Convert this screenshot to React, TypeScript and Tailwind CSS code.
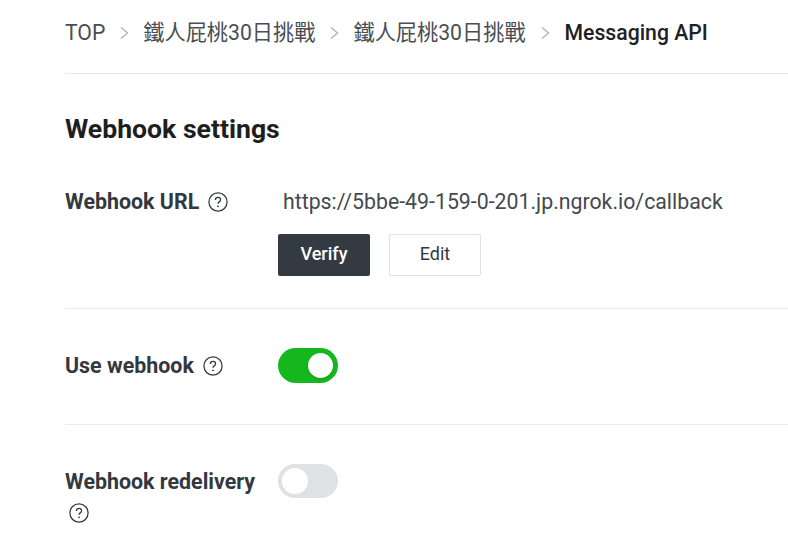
import React from "react";

const Help = () => (
  <svg width="20" height="20" viewBox="0 0 20 20" fill="none" className="shrink-0">
    <circle cx="10" cy="10" r="9.1" stroke="#33383e" strokeWidth="1.25" />
    <path d="M7.4 8c0-1.6 1.1-2.6 2.6-2.6s2.6 1 2.6 2.3c0 1.1-.6 1.6-1.4 2.2-.8.5-1.2 1-1.2 1.9" stroke="#33383e" strokeWidth="1.25" fill="none" />
    <circle cx="10" cy="14.3" r=".9" fill="#33383e" />
  </svg>
);

const Chevron = () => (
  <svg width="9" height="14" viewBox="0 0 9 14" fill="none" className="shrink-0">
    <path d="M1 1.5 7.5 7 1 12.5" stroke="#b2b5b8" strokeWidth="1.4" />
  </svg>
);

const crumbFont = "font-['Roboto','Noto_Sans_CJK_TC',sans-serif]";

export default function App() {
  return (
    <div className={`w-[788px] h-[538px] overflow-hidden bg-white pl-[65px] ${crumbFont} text-[#33383e]`}>
      <nav className="h-[74px] border-b border-[#e9eaeb] flex items-center pb-[8px] text-[21.2px] text-[#4a4e53] whitespace-nowrap">
        <span>TOP</span>
        <span className="ml-[15px] mr-[14px] flex"><Chevron /></span>
        <span>鐵人屁桃30日挑戰</span>
        <span className="ml-[15px] mr-[14px] flex"><Chevron /></span>
        <span>鐵人屁桃30日挑戰</span>
        <span className="ml-[15px] mr-[15px] flex"><Chevron /></span>
        <span className="font-medium text-[#1e2125]">Messaging API</span>
      </nav>

      <h1 className="text-[26.6px] leading-[30px] font-bold text-[#1e1e1e] mt-[40px]">Webhook settings</h1>

      <section className="h-[124px] border-b border-[#e9eaeb] flex mt-[41px] pt-[2px]">
        <div className="w-[213px] flex items-start gap-[9px]">
          <span className="text-[21.4px] leading-[30px] font-bold">Webhook URL</span>
          <span className="mt-[5px]"><Help /></span>
        </div>
        <div>
          <div className="pl-[5px] text-[21.3px] leading-[30px] text-[#44494f] whitespace-nowrap">https://5bbe-49-159-0-201.jp.ngrok.io/callback</div>
          <div className="flex gap-[19px] mt-[17px]">
            <button className="w-[92px] h-[42px] pb-[4px] rounded-[2px] bg-[#343a41] text-white text-[18px] font-medium">Verify</button>
            <button className="w-[92px] h-[42px] pb-[4px] rounded-[2px] bg-white border border-[#dfe1e3] text-[#33383e] text-[18px]">Edit</button>
          </div>
        </div>
      </section>

      <section className="h-[116px] border-b border-[#e9eaeb] flex items-start pt-[39px]">
        <div className="w-[213px] flex items-center gap-[9px] h-[35px]">
          <span className="text-[21.4px] leading-[30px] font-bold">Use webhook</span>
          <Help />
        </div>
        <div className="w-[60px] h-[35px] rounded-full bg-[#14b81e] flex items-center justify-end pr-[5px]">
          <span className="w-[25px] h-[25px] rounded-full bg-white shadow-[0_1px_2px_rgba(0,0,0,0.2)]" />
        </div>
      </section>

      <section className="flex items-start pt-[39px]">
        <div className="w-[213px] leading-none pt-[1px]">
          <div className="text-[21.4px] leading-[34px] font-bold whitespace-nowrap">Webhook redelivery</div>
          <div className="mt-[4px] pl-[4px]"><Help /></div>
        </div>
        <div className="w-[60px] h-[34px] rounded-full bg-[#dfe2e5] flex items-center pl-[4px]">
          <span className="w-[26px] h-[26px] rounded-full bg-white" />
        </div>
      </section>
    </div>
  );
}
